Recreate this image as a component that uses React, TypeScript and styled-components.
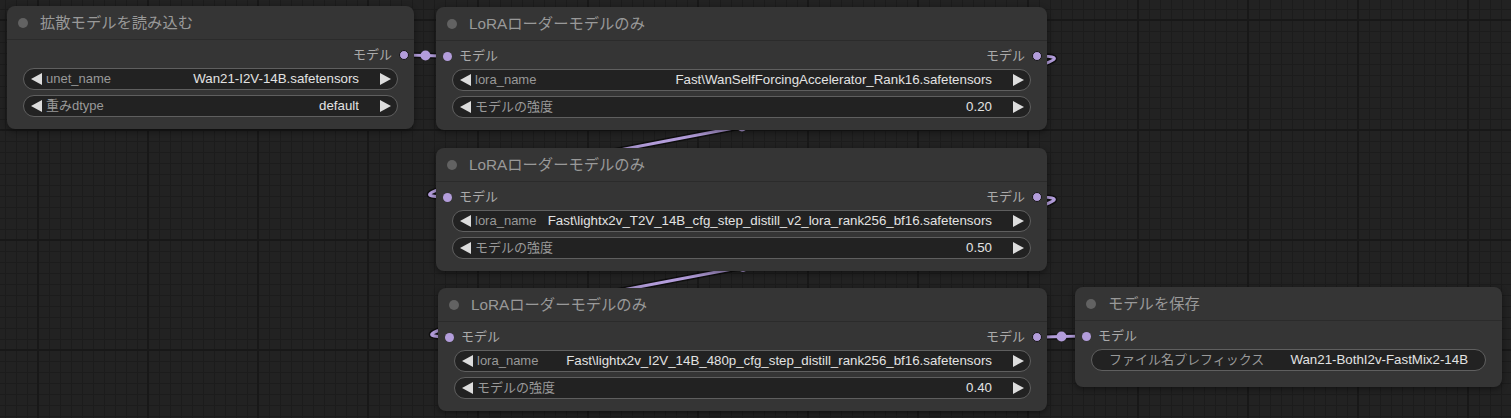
import React from "react";
import styled, { createGlobalStyle } from "styled-components";

const GlobalStyle = createGlobalStyle`
  html, body { margin: 0; padding: 0; background: #222; }
  body { font-family: "Liberation Sans", "Noto Sans CJK JP", sans-serif; }
  * { box-sizing: border-box; }
`;

const LINK = "#b39ddb";
const HEADER_H = 34;
const SLOT_OFFSET = 49;

const Canvas = styled.div`
  position: relative;
  width: 1511px;
  height: 418px;
  overflow: hidden;
  background-color: #222;
  background-image:
    linear-gradient(to right, #181818 2px, transparent 2px),
    linear-gradient(to bottom, #181818 2px, transparent 2px),
    linear-gradient(to right, #1c1c1c 1px, transparent 1px),
    linear-gradient(to bottom, #1c1c1c 1px, transparent 1px);
  background-size: 110px 110px, 110px 110px, 11px 11px, 11px 11px;
  background-position: 37px 19px, 37px 19px, 38px 20px, 38px 20px;
`;

const Wires = styled.svg`
  position: absolute;
  left: 0;
  top: 0;
  width: 1511px;
  height: 418px;
`;

const Node = styled.div<{ $x: number; $y: number; $w: number }>`
  position: absolute;
  left: ${(p) => p.$x}px;
  top: ${(p) => p.$y}px;
  width: ${(p) => p.$w}px;
  background: #353535;
  border-radius: 8px;
  box-shadow: 0 2px 6px rgba(0, 0, 0, 0.45);
  display: flex;
  flex-direction: column;
`;

const Header = styled.div`
  height: ${HEADER_H}px;
  border-bottom: 1px solid #2b2b2b;
  display: flex;
  align-items: center;
  padding: 1px 0 0 11px;
  gap: 12px;
`;

const TitleDot = styled.span`
  width: 10px;
  height: 10px;
  border-radius: 50%;
  background: #626262;
  flex: none;
`;

const Title = styled.span`
  font-size: 15.3px;
  line-height: 20px;
  color: #999;
  white-space: nowrap;
`;

const Body = styled.div<{ $pb: number }>`
  padding: 5px 16px ${(p) => p.$pb}px;
  display: flex;
  flex-direction: column;
  gap: 5px;
`;

const SlotRow = styled.div`
  height: 20px;
  margin: 0 -16px -2px;
  padding: 0 5px 0 7px;
  display: flex;
  align-items: center;
  justify-content: space-between;
  font-size: 13px;
  line-height: 16px;
  color: #aaa;
`;

const Slot = styled.div<{ $out?: boolean }>`
  display: flex;
  align-items: center;
  gap: 7px;
  margin-left: ${(p) => (p.$out ? "auto" : "0")};
`;

const SlotDot = styled.span<{ $out?: boolean }>`
  width: ${(p) => (p.$out ? 10 : 9)}px;
  height: ${(p) => (p.$out ? 10 : 9)}px;
  border-radius: 50%;
  background: ${LINK};
  border: ${(p) => (p.$out ? "1px solid #151515" : "none")};
  flex: none;
`;

const Widget = styled.div<{ $text?: boolean }>`
  height: 22px;
  border: 1px solid #5f5f5f;
  border-radius: 11px;
  background: #222;
  display: flex;
  align-items: center;
  padding: ${(p) => (p.$text ? "0 17px 0 17px" : "0 6px 0 7px")};
  font-size: 13px;
  white-space: nowrap;
  overflow: hidden;
`;

const WTexts = styled.div<{ $text?: boolean }>`
  flex: 1;
  min-width: 0;
  display: flex;
  align-items: baseline;
  line-height: 16px;
  margin: ${(p) => (p.$text ? "0" : "0 21px 0 4px")};
`;

const WLabel = styled.span`
  color: #999;
  flex: none;
`;

const WValue = styled.span`
  color: #e2e2e2;
  font-size: 13.3px;
  margin-left: auto;
  padding-left: 10px;
  overflow: hidden;
  text-overflow: ellipsis;
`;

const Arrow = styled.svg`
  width: 11px;
  height: 12px;
  flex: none;
  display: block;
`;

const LeftArrow = () => (
  <Arrow viewBox="0 0 11 12">
    <polygon points="11,0 11,12 0,6" fill="#ddd" />
  </Arrow>
);
const RightArrow = () => (
  <Arrow viewBox="0 0 11 12">
    <polygon points="0,0 0,12 11,6" fill="#ddd" />
  </Arrow>
);

type W = { label: string; value: string; text?: boolean };
type N = {
  id: string;
  x: number;
  y: number;
  w: number;
  title: string;
  input?: boolean;
  output?: boolean;
  widgets: W[];
  pb?: number;
};

const nodes: N[] = [
  {
    id: "n1",
    x: 7,
    y: 6,
    w: 407,
    title: "拡散モデルを読み込む",
    output: true,
    widgets: [
      { label: "unet_name", value: "Wan21-I2V-14B.safetensors" },
      { label: "重みdtype", value: "default" },
    ],
  },
  {
    id: "n2",
    x: 436,
    y: 7,
    w: 611,
    title: "LoRAローダーモデルのみ",
    input: true,
    output: true,
    widgets: [
      { label: "lora_name", value: "Fast\\WanSelfForcingAccelerator_Rank16.safetensors" },
      { label: "モデルの強度", value: "0.20" },
    ],
  },
  {
    id: "n3",
    x: 436,
    y: 148,
    w: 611,
    title: "LoRAローダーモデルのみ",
    input: true,
    output: true,
    widgets: [
      { label: "lora_name", value: "Fast\\lightx2v_T2V_14B_cfg_step_distill_v2_lora_rank256_bf16.safetensors" },
      { label: "モデルの強度", value: "0.50" },
    ],
  },
  {
    id: "n4",
    x: 438,
    y: 288,
    w: 609,
    title: "LoRAローダーモデルのみ",
    input: true,
    output: true,
    widgets: [
      { label: "lora_name", value: "Fast\\lightx2v_I2V_14B_480p_cfg_step_distill_rank256_bf16.safetensors" },
      { label: "モデルの強度", value: "0.40" },
    ],
  },
  {
    id: "n5",
    x: 1075,
    y: 287,
    w: 427,
    title: "モデルを保存",
    input: true,
    pb: 16,
    widgets: [{ label: "ファイル名プレフィックス", value: "Wan21-BothI2v-FastMix2-14B", text: true }],
  },
];

const byId = (id: string) => nodes.find((n) => n.id === id)!;
const outPos = (n: N) => [n.x + n.w - 10, n.y + SLOT_OFFSET] as const;
const inPos = (n: N) => [n.x + 11, n.y + SLOT_OFFSET] as const;

const links: [string, string][] = [
  ["n1", "n2"],
  ["n2", "n3"],
  ["n3", "n4"],
  ["n4", "n5"],
];

function Link({ from, to }: { from: string; to: string }) {
  const [x1, y1] = outPos(byId(from));
  const [x2, y2] = inPos(byId(to));
  const d = Math.hypot(x2 - x1, y2 - y1) * 0.25;
  const c1x = x1 + d;
  const c2x = x2 - d;
  const path = `M${x1},${y1} C${c1x},${y1} ${c2x},${y2} ${x2},${y2}`;
  const mx = (x1 + 3 * c1x + 3 * c2x + x2) / 8;
  const my = (y1 + 3 * y1 + 3 * y2 + y2) / 8;
  return (
    <g>
      <path d={path} fill="none" stroke="rgba(0,0,0,0.55)" strokeWidth={6} strokeLinecap="round" />
      <path d={path} fill="none" stroke={LINK} strokeWidth={3} strokeLinecap="round" />
      <circle cx={mx} cy={my} r={5} fill={LINK} />
    </g>
  );
}

function GraphNode({ n }: { n: N }) {
  return (
    <Node $x={n.x} $y={n.y} $w={n.w}>
      <Header>
        <TitleDot />
        <Title>{n.title}</Title>
      </Header>
      <Body $pb={n.pb ?? 12}>
        <SlotRow>
          {n.input && (
            <Slot>
              <SlotDot />
              <span>モデル</span>
            </Slot>
          )}
          {n.output && (
            <Slot $out>
              <span>モデル</span>
              <SlotDot $out />
            </Slot>
          )}
        </SlotRow>
        {n.widgets.map((w) =>
          w.text ? (
            <Widget key={w.label} $text>
              <WTexts $text>
                <WLabel>{w.label}</WLabel>
                <WValue>{w.value}</WValue>
              </WTexts>
            </Widget>
          ) : (
            <Widget key={w.label}>
              <LeftArrow />
              <WTexts>
                <WLabel>{w.label}</WLabel>
                <WValue>{w.value}</WValue>
              </WTexts>
              <RightArrow />
            </Widget>
          )
        )}
      </Body>
    </Node>
  );
}

export default function App() {
  return (
    <>
      <GlobalStyle />
      <Canvas>
        <Wires viewBox="0 0 1511 418">
          {links.map(([a, b]) => (
            <Link key={a + b} from={a} to={b} />
          ))}
        </Wires>
        {nodes.map((n) => (
          <GraphNode key={n.id} n={n} />
        ))}
      </Canvas>
    </>
  );
}
